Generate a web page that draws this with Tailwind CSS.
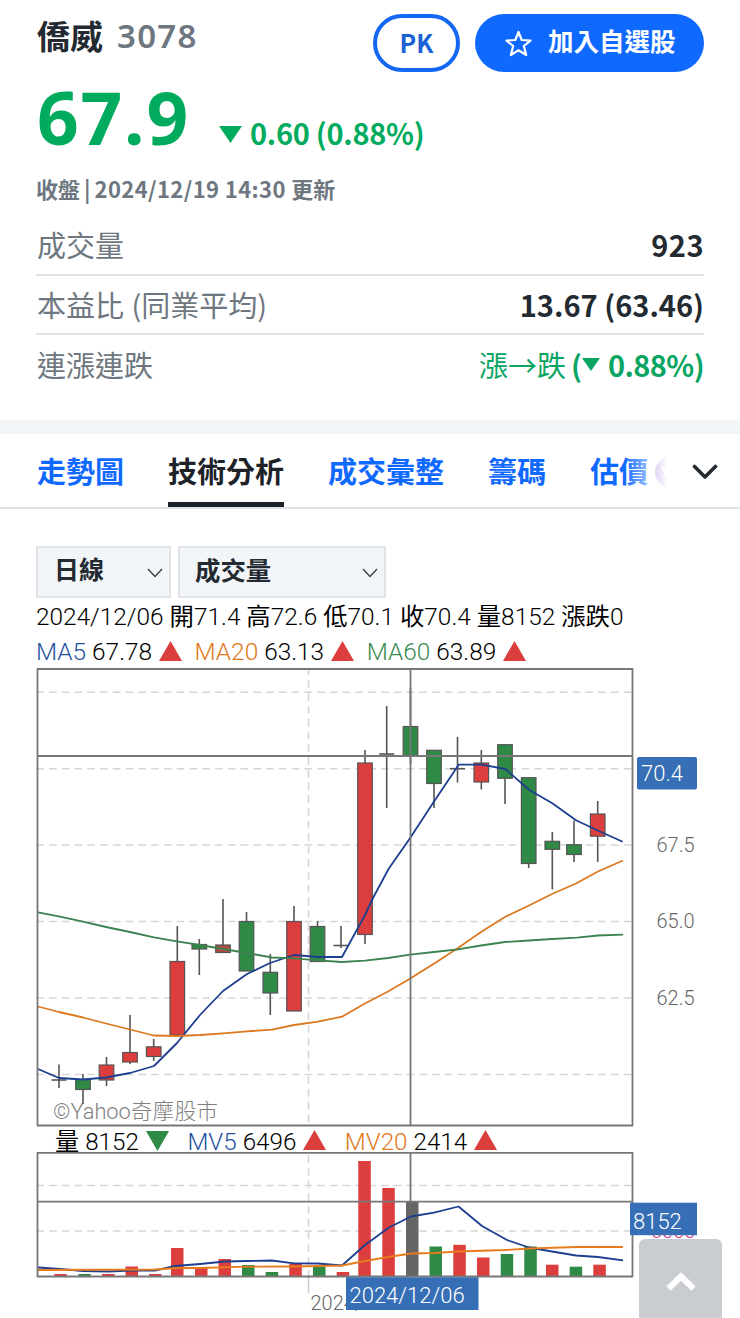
<!DOCTYPE html>
<html lang="zh-Hant">
<head>
    <meta charset="UTF-8">
    <meta name="viewport" content="width=device-width, initial-scale=1.0">
    <title>僑威 3078 技術分析</title>
    <script src="https://cdn.jsdelivr.net/npm/@tailwindcss/browser@4"></script>
</head>
<body class="bg-white h-[1318px] overflow-hidden font-['Noto_Sans_CJK_TC',sans-serif] text-[#232a31]">
    <header class="px-9 h-[420px]">
        <div class="flex items-start justify-between pt-[14px] h-[75px]">
            <h1 class="flex items-center h-[42px] pl-px font-bold">
                <span class="text-[33px] leading-none">僑威</span>
                <span class="ml-[14px] text-[33px] leading-none font-semibold tracking-[1.3px] font-['Noto_Sans',sans-serif] text-[#6e7780]">3078</span>
            </h1>
            <div class="flex gap-[15px]">
                <button class="w-[87px] h-[58px] rounded-full border-4 border-[#1467f2] text-[#1b62d4] text-[25px] font-bold">PK</button>
                <button class="flex items-center w-[229px] h-[58px] pl-[29px] rounded-full bg-[#0f69ff] text-white text-[25.5px] font-bold">
                    <svg class="w-[29px] h-[29px] mr-[15px]" viewBox="0 0 29 29" fill="none" stroke="currentColor" stroke-width="2.2" stroke-linejoin="round">
                        <path d="M14.5 3 L17.7 11 L26.5 11.6 L19.8 17 L22.2 26 L14.5 21.2 L6.8 26 L9.2 17 L2.5 11.6 L11.3 11 Z"/>
                    </svg>
                    <span class="-mt-[5px]">加入自選股</span>
                </button>
            </div>
        </div>

        <div class="flex items-baseline h-[81px] pl-px text-[#00ab5e]">
            <span class="text-[73px] leading-[83px] font-bold tracking-[1.8px] font-['Noto_Sans',sans-serif]">67.9</span>
            <svg class="w-[23px] h-[17px] -translate-y-[2px] ml-[29px] mr-[8px]" viewBox="0 0 23 17"><path d="M0 0H23L11.5 17Z" fill="currentColor"/></svg>
            <span class="text-[29px] leading-none font-bold tracking-[-0.3px]">0.60 (0.88%)</span>
        </div>

        <p class="flex items-center h-[60px] pt-[4px] text-[22px] font-semibold text-[#6e7780] whitespace-pre">收盤<span class="mx-[4px]">|</span><span class="tracking-[0.4px]">2024/12/19 14:30 </span>更新</p>

        <ul class="text-[29px] leading-none">
            <li class="flex items-center justify-between h-[60px] pb-px border-b-2 border-[#dfe3e7]">
                <span class="pl-px text-[#6e7780]">成交量</span>
                <span class="font-bold tracking-[0.5px]">923</span>
            </li>
            <li class="flex items-center justify-between h-[59px] border-b-2 border-[#dfe3e7]">
                <span class="pl-px text-[#6e7780] [word-spacing:1px]">本益比 (同業平均)</span>
                <span class="font-bold">13.67 (63.46)</span>
            </li>
            <li class="flex items-center justify-between h-[58px]">
                <span class="pl-px text-[#6e7780]">連漲連跌</span>
                <span class="flex items-center text-[#0aa562]">
                    <span class="mr-[5px]">漲→跌</span>
                    <span class="font-bold">(</span>
                    <svg class="w-[18px] h-[13px] mr-[8px]" viewBox="0 0 18 13"><path d="M0 0H18L9 13Z" fill="currentColor"/></svg>
                    <span class="font-bold tracking-[-0.6px]">0.88%)</span>
                </span>
            </li>
        </ul>
    </header>

    <div class="h-[14px] bg-[#f3f6f9]"></div>

    <nav class="relative flex gap-[44px] h-[75px] pl-[37px] border-b-2 border-[#e0e4e9] text-[29px] leading-[72px] font-bold text-[#0f69ff] whitespace-nowrap overflow-hidden">
        <a>走勢圖</a>
        <a class="h-[74px] border-b-[6px] border-[#1d2228] text-[#1d2228]">技術分析</a>
        <a>成交彙整</a>
        <a>籌碼</a>
        <a>估價</a>
        <!-- badge and fade at the scrolled edge of the tabs -->
        <span class="absolute left-[655px] top-[22px] w-[32px] h-[32px] rounded-full bg-[#a070e0]"></span>
        <svg class="absolute left-[661px] top-[30px] w-[10px] h-[14px]" viewBox="0 0 10 14" fill="none" stroke="white" stroke-width="2.5"><path d="M1 2L6 12"/></svg>
        <div class="absolute left-[624px] top-0 w-[44px] h-[73px] bg-linear-to-r from-white/0 to-white"></div>
        <div class="absolute left-[668px] right-0 top-0 h-[73px] flex items-center pl-[24px] bg-white">
            <svg class="w-[26px] h-[16px] mt-[3px]" viewBox="0 0 26 16" fill="none" stroke="#232a31" stroke-width="3.6" stroke-linecap="round" stroke-linejoin="round"><path d="M2.5 2.5L13 13L23.5 2.5"/></svg>
        </div>
    </nav>

    <main class="font-['Roboto','Noto_Sans_CJK_TC',sans-serif] font-light">
        <div class="flex gap-[7px] pl-[36px] pt-[37px] h-[91px]">
            <div class="flex items-center justify-between w-[135px] h-[52px] pl-[16px] pr-[6px] pb-[2px] border-2 border-[#e0e4e9] bg-[#f3f6f9] text-[25px] font-bold">
                日線
                <svg class="w-[16px] h-[10px] mt-[3px]" viewBox="0 0 16 10" fill="none" stroke="#333a41" stroke-width="1.3"><path d="M1 1L8 8.5L15 1"/></svg>
            </div>
            <div class="flex items-center justify-between w-[208px] h-[52px] pl-[15px] pr-[6px] pb-[2px] border-2 border-[#e0e4e9] bg-[#f3f6f9] text-[25.4px] font-bold">
                成交量
                <svg class="w-[16px] h-[10px] mt-[3px]" viewBox="0 0 16 10" fill="none" stroke="#333a41" stroke-width="1.3"><path d="M1 1L8 8.5L15 1"/></svg>
            </div>
        </div>

        <p class="h-[34px] pl-[36px] text-[24.4px] leading-[34px] text-black whitespace-pre">2024/12/06 <span class="font-normal">開</span>71.4 <span class="font-normal">高</span>72.6 <span class="font-normal">低</span>70.1 <span class="font-normal">收</span>70.4 <span class="font-normal">量</span>8152 <span class="font-normal">漲跌</span>0</p>
        <div class="flex items-center h-[33px] pt-[3px] pl-[36px] text-[24.4px] text-black">
            <span class="mr-[6px] text-[#2450a0]">MA5</span>67.78
            <svg class="w-[23px] h-[20px] -mt-[3px] ml-[7px] mr-[12.5px]" viewBox="0 0 22 19"><path d="M0 19H22L11 0Z" fill="#dc3e3e"/></svg>
            <span class="mr-[6px] text-[#e07820]">MA20</span>63.13
            <svg class="w-[23px] h-[20px] -mt-[3px] ml-[7px] mr-[12.5px]" viewBox="0 0 22 19"><path d="M0 19H22L11 0Z" fill="#dc3e3e"/></svg>
            <span class="mr-[6px] text-[#3c8c54]">MA60</span>63.89
            <svg class="w-[23px] h-[20px] -mt-[3px] ml-[7px]" viewBox="0 0 22 19"><path d="M0 19H22L11 0Z" fill="#dc3e3e"/></svg>
        </div>

        <svg class="block w-[740px] h-[460px]" viewBox="0 667 740 460">
            <g stroke="#d6d6d6" stroke-width="1.6" stroke-dasharray="7.7 5.07">
                <path d="M36.2 692.3H632M36.2 768.7H632M36.2 845H632M36.2 921.5H632M36.2 998H632M36.2 1074.5H632"/>
                <path d="M308.5 667.6V1125"/>
            </g>
            <text x="53" y="1118.5" font-size="21.8" fill="#808080">©Yahoo奇摩股市</text>
            <g id="candles" stroke="#555" stroke-width="1.6"></g>
            <g fill="none" stroke-width="1.8" stroke-linejoin="round">
                <path stroke="#1d3f8f" d="M38 1069L59 1078L83 1079.5L106 1077.5L130 1073L154 1066L177 1043L200 1015L223 991L247 974L270 963L294 955L318 957L342 957L365 915L373 898L388.7 868.7L410.3 837.7L434 801.5L458.7 764.7L481.5 764.7L505.3 769L529.3 790L552.3 803.3L576 820.3L598.3 830.7L622.7 841.7"/>
                <path stroke="#dc7820" d="M38 1006.5L59 1012L83 1017.5L106 1023.5L130 1029.5L153.7 1035.5L177 1036L200 1035L223 1033.3L247 1031.3L272 1029.7L294 1025L318 1021.7L342 1016.7L364 1004L388 991.5L410.3 978.5L435 963L458 948L481 932L505.3 916.7L528 906L552 894L576 883.5L598 871.5L623 860.5"/>
                <path stroke="#3c8350" d="M38 912.3L60 916.7L83 921.7L106 927L130 932L154 937.3L177 941.3L200 945L223 949L247 953L272 957.5L294 958.3L318 960.3L342 962L365 960.7L388 958L410 954.7L434 952L458 949.3L481 945.5L505 942L529 940.5L552 939L577 937.7L598 935.5L623 934.7"/>
                <path stroke="#777" d="M37.5 669H632.5V1125.5H37.5ZM38 756H632M410.5 669V1125"/>
            </g>
            <g font-size="20" fill="#666">
                <text x="656.5" y="852">67.5</text>
                <text x="656.5" y="928">65.0</text>
                <text x="656.5" y="1004.5">62.5</text>
            </g>
            <rect x="637" y="757" width="60" height="32.5" rx="2" fill="#366fb5"/>
            <text x="641" y="781" font-size="22" fill="#fff">70.4</text>
        </svg>

        <div class="flex items-center h-[25px] pt-[6px] pl-[55px] text-[24.2px] leading-none text-black">
            <span class="font-normal">量</span><span class="ml-[6px]">8152</span>
            <svg class="w-[23px] h-[20px] -mt-[3px] ml-[7px] mr-[18.5px]" viewBox="0 0 23 20"><path d="M0 0H23L11.5 20Z" fill="#2f8a46"/></svg>
            <span class="mr-[6px] text-[#2450a0]">MV5</span>6496
            <svg class="w-[23px] h-[20px] -mt-[5px] ml-[7px] mr-[18.5px]" viewBox="0 0 23 20"><path d="M0 20H23L11.5 0Z" fill="#dc3e3e"/></svg>
            <span class="mr-[6px] text-[#e07820]">MV20</span>2414
            <svg class="w-[23px] h-[20px] -mt-[5px] ml-[7px]" viewBox="0 0 23 20"><path d="M0 20H23L11.5 0Z" fill="#dc3e3e"/></svg>
        </div>

        <svg class="block w-[740px] h-[166px]" viewBox="0 1152 740 166">
            <g stroke="#d6d6d6" stroke-width="1.6" stroke-dasharray="7.7 5.07">
                <path d="M36.2 1185.5H632M36.2 1231H632"/>
                <path d="M308.5 1155V1276"/>
            </g>
            <path d="M308.5 1277V1293" stroke="#c4c8d2" stroke-width="1.4"/>
            <g id="volumes"></g>
            <g fill="none" stroke-width="1.8" stroke-linejoin="round">
                <path stroke="#1d3f8f" d="M38 1267.5L60 1269L83 1271L108 1271.5L132 1270.5L155 1270.5L175 1266L200 1264L225 1261.5L247 1261L272 1260.5L294 1263.3L318 1263.5L342 1265.5L365 1245L389 1227.5L411 1216.5L434 1212.7L458.5 1206.5L482 1226L507 1240L529 1247.5L552 1251.5L576 1255.5L598 1257L623 1260.3"/>
                <path stroke="#e87c1c" d="M38 1270L155 1269.5L177 1268L200 1268L247 1266.7L294 1266.5L342 1265.5L365 1261L388 1257L411 1253.5L434 1253L458 1251.5L505 1250L529 1248.5L577 1247L623 1247"/>
                <path stroke="#777" d="M37.5 1152.8H632.5V1276.5H37.5ZM38 1201.7H632M410.5 1153V1202"/>
            </g>
            <text x="651" y="1237.5" font-size="20" fill="#d0408c">6000</text>
            <rect x="630" y="1202.7" width="67" height="32.5" fill="#366fb5"/>
            <text x="633" y="1228.5" font-size="22" fill="#fff">8152</text>
            <text x="310.5" y="1310" font-size="20" fill="#666">2024/12</text>
            <rect x="346" y="1277.3" width="132.5" height="32.7" fill="#366fb5"/>
            <text x="349.5" y="1303" font-size="22" fill="#fff">2024/12/06</text>
        </svg>
    </main>

    <button class="fixed left-[639px] top-[1239px] w-[83px] h-[84px] rounded-[6px] bg-[#c9cdd2]">
        <svg class="absolute left-[27px] top-[31px] w-[30px] h-[22px]" viewBox="0 0 30 22" fill="none" stroke="white" stroke-width="6" stroke-linejoin="miter"><path d="M2.5 18.5L15 6.5L27.5 18.5"/></svg>
    </button>

    <script>
        const UP = '#dc3e3e', DOWN = '#2f8a46';

        // [x, high, body top, body bottom, low, colour]
        const candles = [
            [59, 1064.5, 1080, 1080, 1088, DOWN], [83, 1074, 1079.5, 1089.5, 1104, DOWN],
            [106.5, 1057, 1065, 1080, 1086, UP], [130, 1015, 1052.5, 1062, 1064, UP],
            [153.7, 1039, 1046.8, 1056.5, 1061, UP], [177.3, 926, 961.5, 1035, 1035, UP],
            [199.3, 939, 944.5, 949, 975, DOWN], [223, 899, 945, 952.5, 952.5, '#b04c40'],
            [246.5, 912, 921.5, 971, 971, DOWN], [270.3, 954, 972.3, 993, 1015, DOWN],
            [294, 906, 921.5, 1011, 1011, UP], [317.5, 921, 926.5, 961.5, 961.5, DOWN],
            [341, 926, 945.5, 945.5, 948, DOWN], [365, 750, 763, 934.5, 944, UP],
            [386.7, 706, 754, 754, 808, DOWN], [410.5, 688, 726.5, 755.5, 764, DOWN],
            [434, 750, 750.3, 783.5, 808, DOWN], [457.5, 737, 768.7, 768.7, 782.5, DOWN],
            [481.3, 750, 763, 782, 789.5, UP], [505, 744.5, 744.7, 778.3, 804, DOWN],
            [528.7, 777.5, 777.7, 863.5, 868, DOWN], [552.3, 832, 841.3, 849.3, 889.5, DOWN],
            [574, 820.5, 844.7, 854.5, 862, DOWN], [597.7, 801, 814, 836.2, 862, UP]
        ];

        // [left, top, colour]
        const volumes = [
            [54.3, 1274, UP], [78.3, 1274, DOWN], [102, 1274, UP], [125.5, 1266.5, UP],
            [149, 1274, UP], [171, 1248, UP], [195, 1267, UP], [218.5, 1259, UP],
            [242, 1265, DOWN], [265.7, 1272, DOWN], [289.3, 1264, UP], [313, 1266.5, DOWN],
            [336.7, 1272, UP], [358.3, 1161, UP], [382.3, 1188, UP], [406, 1202, '#666'],
            [429.5, 1246.5, DOWN], [453.3, 1244.8, UP], [477, 1257.5, UP], [500.7, 1254, DOWN],
            [524.3, 1246.5, DOWN], [546, 1264.7, UP], [569.7, 1266.7, DOWN], [593.3, 1264.7, UP]
        ];

        document.getElementById('candles').innerHTML = candles.map(([x, high, top, bottom, low, color]) =>
            `<path d="M${x} ${high}V${low}"/><rect x="${x - 7.3}" y="${top}" width="14.6" height="${bottom - top}" fill="${color}" stroke="#555" stroke-width="1.2"/>` +
            (top === bottom ? `<path d="M${x - 7.5} ${top}H${x + 7.5}"/>` : '')
        ).join('');

        document.getElementById('volumes').innerHTML = volumes.map(([x, top, color]) =>
            `<rect x="${x}" y="${top}" width="12.5" height="${1276 - top}" fill="${color}"/>`
        ).join('');
    </script>
</body>
</html>
